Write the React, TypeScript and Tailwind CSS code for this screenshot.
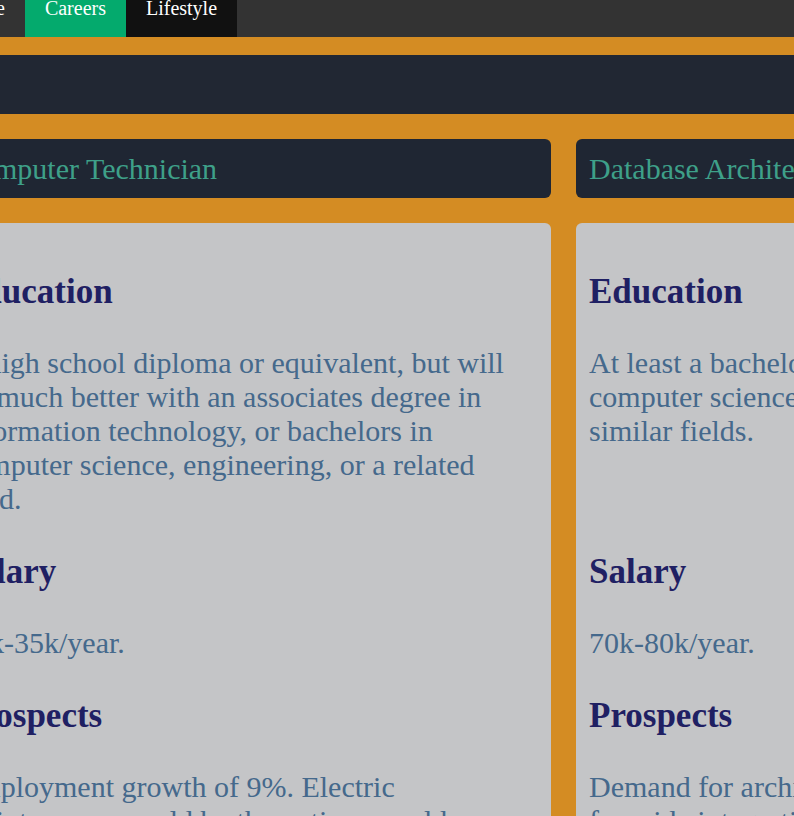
import React from "react"

interface Career {
  title: string
  education: string
  salary: string
  prospects: string
}

const careers: Career[] = [
  {
    title: "Computer Technician",
    education:
      "A high school diploma or equivalent, but will do much better with an associates degree in information technology, or bachelors in computer science, engineering, or a related field.",
    salary: "25k-35k/year.",
    prospects:
      "Employment growth of 9%. Electric maintenance would be the option, would build a hub. Use of cloud and mobile devices keeps technicians in demand.",
  },
  {
    title: "Database Architect",
    education:
      "At least a bachelors or masters degree in computer science, software engineering, or similar fields.",
    salary: "70k-80k/year.",
    prospects:
      "Demand for architects is expected to increase for wide integration of data across every industry.",
  },
]

const links = ["Home", "Careers", "Lifestyle"]

function Nav() {
  return (
    <nav className="flex h-[37px] bg-[#333333] text-[20px] text-white">
      {links.map((l) => (
        <a
          key={l}
          className={
            "h-full px-5 leading-[17px] " +
            (l === "Careers" ? "bg-[#04aa6d]" : l === "Lifestyle" ? "bg-[#111111]" : "")
          }
        >
          {l}
        </a>
      ))}
    </nav>
  )
}

function CareerCard({ c }: { c: Career }) {
  return (
    <div className="flex flex-col gap-[25px]">
      <div className="h-[59px] rounded-md bg-[#1f2633] px-[13px] pt-[13px] text-[30px] leading-[34px] text-[#3ea089]">
        {c.title}
      </div>
      <div className="flex flex-col gap-[35px] rounded-md bg-[#c4c5c7] pl-[13px] pr-[40px] pt-[48px] pb-10">
        <h3 className="-mb-[1px] pt-[1px] text-[35px] font-bold leading-[40px] text-[#1f2063]">Education</h3>
        <p className="min-h-[170px] text-[30px] leading-[34px] text-[#45698c]">{c.education}</p>
        <h3 className="-mb-[1px] pt-[1px] text-[35px] font-bold leading-[40px] text-[#1f2063]">Salary</h3>
        <p className="text-[30px] leading-[34px] text-[#45698c]">{c.salary}</p>
        <h3 className="-mb-[1px] pt-[1px] text-[35px] font-bold leading-[40px] text-[#1f2063]">Prospects</h3>
        <p className="text-[30px] leading-[34px] text-[#45698c]">{c.prospects}</p>
      </div>
    </div>
  )
}

export default function App() {
  return (
    <div className="h-[816px] w-full overflow-hidden bg-[#d48c23] font-['Liberation_Serif',serif]">
      <div className="ml-[-64px] w-[1300px]">
        <Nav />
        <div className="h-[18px]" />
        <div className="h-[59px] bg-[#212733]" />
        <div className="h-[25px]" />
        <div className="grid grid-cols-[605px_608px] gap-x-[25px] pl-[10px]">
          {careers.map((c) => (
            <CareerCard key={c.title} c={c} />
          ))}
        </div>
      </div>
    </div>
  )
}
